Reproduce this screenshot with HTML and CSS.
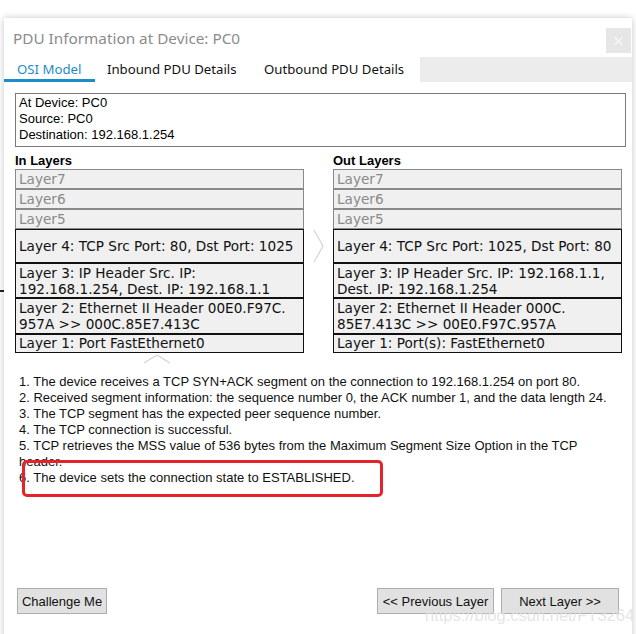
FILE: index.html
```html
<!DOCTYPE html>
<html>
<head>
<meta charset="utf-8">
<link rel="stylesheet" href="styles.css">
</head>
<body>
<div class="stray"></div>
<div class="window">
  <div class="titlebar">
    <span class="title">PDU Information at Device: PC0</span>
    <span class="close">×</span>
  </div>
  <div class="tabs">
    <div class="tab tab-osi active">OSI Model</div>
    <div class="tab tab-in">Inbound PDU Details</div>
    <div class="tab tab-out">Outbound PDU Details</div>
    <div class="tab-fill"></div>
  </div>
  <div class="content">
    <div class="info">
      <div>At Device: PC0</div>
      <div>Source: PC0</div>
      <div>Destination: 192.168.1.254</div>
    </div>
    <div class="layers">
      <div class="col">
        <div class="col-head">In Layers</div>
        <div class="layer dim">Layer7</div>
        <div class="layer dim">Layer6</div>
        <div class="layer dim">Layer5</div>
        <div class="layer on l4">Layer 4: TCP Src Port: 80, Dst Port: 1025</div>
        <div class="layer on l3">Layer 3: IP Header Src. IP: <br>192.168.1.254, Dest. IP: 192.168.1.1</div>
        <div class="layer on l2">Layer 2: Ethernet II Header 00E0.F97C.<br>957A &gt;&gt; 000C.85E7.413C</div>
        <div class="layer on l1">Layer 1: Port FastEthernet0</div>
      </div>
      <div class="mid">
        <svg class="chev-right" width="12" height="34" viewBox="0 0 12 34"><polyline points="1,1 10,17 1,33" fill="none" stroke="#d4d4d4" stroke-width="1.2"/></svg>
      </div>
      <div class="col">
        <div class="col-head">Out Layers</div>
        <div class="layer dim">Layer7</div>
        <div class="layer dim">Layer6</div>
        <div class="layer dim">Layer5</div>
        <div class="layer on l4">Layer 4: TCP Src Port: 1025, Dst Port: 80</div>
        <div class="layer on l3">Layer 3: IP Header Src. IP: 192.168.1.1,<br>Dest. IP: 192.168.1.254</div>
        <div class="layer on l2">Layer 2: Ethernet II Header 000C.<br>85E7.413C &gt;&gt; 00E0.F97C.957A</div>
        <div class="layer on l1">Layer 1: Port(s): FastEthernet0</div>
      </div>
    </div>
    <div class="chev-up-row">
      <svg width="28" height="10" viewBox="0 0 28 10"><polyline points="1,9 14,1 27,9" fill="none" stroke="#d4d4d4" stroke-width="1.2"/></svg>
    </div>
    <div class="desc">
      <div>1. The device receives a TCP SYN+ACK segment on the connection to 192.168.1.254 on port 80.</div>
      <div>2. Received segment information: the sequence number 0, the ACK number 1, and the data length 24.</div>
      <div>3. The TCP segment has the expected peer sequence number.</div>
      <div>4. The TCP connection is successful.</div>
      <div>5. TCP retrieves the MSS value of 536 bytes from the Maximum Segment Size Option in the TCP header.</div>
      <div>6. The device sets the connection state to ESTABLISHED.</div>
      <div class="highlight"></div>
    </div>
  </div>
  <div class="buttons">
    <button class="btn btn-challenge">Challenge Me</button>
    <div class="nav">
      <button class="btn btn-prev">&lt;&lt; Previous Layer</button>
      <button class="btn btn-next">Next Layer &gt;&gt;</button>
    </div>
  </div>
  <div class="watermark">https://blog.csdn.net/FT3264</div>
</div>
</body>
</html>
```

FILE: styles.css
```css
html, body {
  margin: 0;
  padding: 0;
  background: #ffffff;
  overflow: hidden;
}
body {
  width: 636px;
  height: 634px;
  position: relative;
  font-family: "Liberation Sans", Arial, sans-serif;
}
.stray {
  position: absolute;
  left: 0;
  top: 290px;
  width: 4px;
  height: 2px;
  background: #222;
}
.window {
  position: relative;
  margin-left: 4px;
  margin-top: 18px;
  width: 628px;
  height: 640px;
  background: #ffffff;
  box-shadow: 0 0 7px rgba(0, 0, 0, 0.22);
  display: flex;
  flex-direction: column;
}
.titlebar {
  height: 39px;
  display: flex;
  align-items: flex-start;
  justify-content: space-between;
}
.title {
  font-family: "Noto Sans", "Open Sans", sans-serif;
  font-size: 15.3px;
  color: #8c8c8c;
  padding-left: 9px;
  padding-top: 10px;
  line-height: 20px;
}
.close {
  margin-top: 10px;
  margin-right: 1px;
  width: 25px;
  height: 25px;
  background: #e6e6e6;
  color: #f6f6f6;
  font-size: 16px;
  line-height: 25px;
  text-align: center;
  font-family: "DejaVu Sans", sans-serif;
}
.tabs {
  height: 25px;
  display: flex;
  font-family: "Noto Sans", "Open Sans", sans-serif;
  font-size: 13.2px;
}
.tab {
  line-height: 25px;
  color: #111;
  box-sizing: border-box;
  padding-left: 12px;
  white-space: nowrap;
}
.tab-osi {
  width: 91px;
  padding-left: 13px;
}
.tab-in {
  width: 157px;
}
.tab-out {
  width: 168px;
}
.tab.active {
  color: #1b8dc9;
  border-bottom: 3px solid #1b8dc9;
  height: 25px;
  line-height: 25px;
}
.tab-fill {
  flex: 1;
  background: #ececec;
}
.content {
  padding: 11px 6px 0 11px;
  font-size: 13px;
  color: #000;
}
.info {
  border: 1px solid #7a7a7a;
  height: 51px;
  padding: 1px 3px 0;
  line-height: 16px;
}
.layers {
  display: grid;
  grid-template-columns: 289px 29px 289px;
  margin-top: 6px;
}
.col-head {
  font-weight: bold;
  font-size: 13px;
  line-height: 16px;
  height: 16px;
}
.layer {
  box-sizing: border-box;
  border: 1px solid #8a8a8a;
  background: #f0f0f0;
  font-family: "DejaVu Sans", Verdana, sans-serif;
  font-size: 13.6px;
  padding: 0 3px;
  white-space: nowrap;
  overflow: hidden;
}
.layer.dim {
  height: 20px;
  line-height: 18px;
  color: #8a8a8a;
}
.layer.on {
  border: 1px solid #111;
  color: #111;
  line-height: 16px;
}
.l4 {
  height: 34px;
  display: flex;
  align-items: center;
}
.l3 {
  height: 35px;
  padding-top: 1px;
}
.l2 {
  height: 36px;
  padding-top: 1px;
}
.l1 {
  height: 19px;
  line-height: 17px;
}
.mid {
  display: flex;
  justify-content: center;
  padding-top: 76px;
}
.chev-right {
  display: block;
}
.chev-up-row {
  height: 10px;
  padding-left: 128px;
  margin-top: 1px;
}
.chev-up-row svg {
  display: block;
}
.desc {
  position: relative;
  margin-top: 10px;
  padding-left: 4px;
  width: 596px;
  line-height: 16px;
  font-size: 13px;
  color: #111;
}
.highlight {
  position: absolute;
  left: 7px;
  top: 86px;
  width: 355px;
  height: 31px;
  border: 3px solid #e6232a;
  border-radius: 5px;
}
.buttons {
  margin-top: auto;
  margin-bottom: 44px;
  display: flex;
  justify-content: space-between;
  padding: 0 13px 0 13px;
}
.nav {
  display: flex;
  gap: 7px;
}
.btn {
  font-family: "Liberation Sans", Arial, sans-serif;
  font-size: 13px;
  height: 26px;
  background: #e1e1e1;
  border: 1px solid #adadad;
  color: #111;
  padding: 0;
  margin: 0;
}
.btn-challenge {
  width: 90px;
}
.btn-prev {
  width: 117px;
}
.btn-next {
  width: 118px;
}
.watermark {
  position: absolute;
  left: 421px;
  top: 588px;
  font-family: "Liberation Sans", Arial, sans-serif;
  font-size: 16.5px;
  color: rgba(225, 225, 225, 0.85);
  white-space: nowrap;
}
```
